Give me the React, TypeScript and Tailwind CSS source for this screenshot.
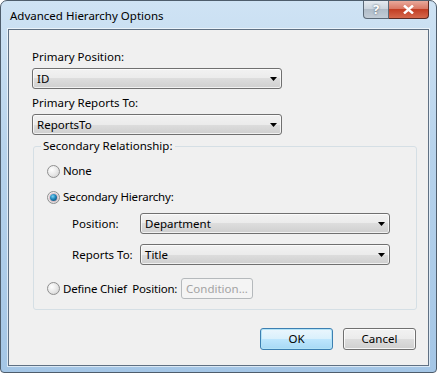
import React from "react";

const font = "font-['Segoe_UI','Noto_Sans','Open_Sans',sans-serif]";
const txt = "text-[11.5px] leading-4";

// Vista-style combo box with the split gradient look
function Combo({ value, width }: { value: string; width: string }) {
  return (
    <div
      className={`${width} h-[21px] flex items-center justify-between border border-[#707070] rounded-[3px] shadow-[inset_0_0_0_1px_rgba(255,255,255,0.7)] bg-[linear-gradient(#f2f2f2_0%,#ebebeb_50%,#dddddd_50%,#cfcfcf_100%)] pl-[4px] pr-[4px]`}
    >
      <span className={`${txt} text-black`}>{value}</span>
      <svg width="7" height="4" viewBox="0 0 7 4">
        <path d="M0 0h7L3.5 4z" fill="#000" />
      </svg>
    </div>
  );
}

function Radio({ checked, label }: { checked?: boolean; label: string }) {
  return (
    <div className="flex items-center h-4 gap-[3px] whitespace-nowrap">
      <div className="shrink-0 w-[13px] h-[13px] rounded-full border border-[#8f8f8f] bg-[radial-gradient(circle_at_35%_35%,#ffffff_0%,#e6e6e6_55%,#c9c9c9_100%)] flex items-center justify-center">
        {checked && (
          <div className="w-[7px] h-[7px] rounded-full bg-[radial-gradient(circle_at_40%_35%,#7cd3f2_0%,#1d83b8_45%,#0b3a5c_100%)] shadow-[0_0_0_1px_rgba(200,140,160,0.5)]" />
        )}
      </div>
      <span className={`${txt} whitespace-pre tracking-[-0.2px]`}>{label}</span>
    </div>
  );
}

function Button({ label, primary, disabled, width }: { label: string; primary?: boolean; disabled?: boolean; width: string }) {
  if (disabled) {
    return (
      <div className={`${width} ${txt} shrink-0 h-[21px] flex items-center justify-center rounded-[3px] border border-[#b5b9bc] bg-[#f4f4f4] text-[#a3a3a3]`}>
        {label}
      </div>
    );
  }
  return (
    <div
      className={`${width} ${txt} h-[22px] flex items-center justify-center rounded-[3px] border text-black ${
        primary
          ? "border-[#3c7fb1] shadow-[inset_0_0_0_1px_#b3e3f7] bg-[linear-gradient(#eaf6fd_0%,#d9f0fc_50%,#bee6fd_50%,#a7d9f5_100%)]"
          : "border-[#707070] shadow-[inset_0_0_0_1px_rgba(255,255,255,0.8)] bg-[linear-gradient(#f2f2f2_0%,#ebebeb_50%,#dddddd_50%,#cfcfcf_100%)]"
      }`}
    >
      {label}
    </div>
  );
}

export default function App() {
  return (
    <div className={`${font} w-[437px] h-[373px] text-black`}>
      <div className="w-full h-full flex flex-col rounded-t-[7px] rounded-b-[4px] border border-[#4e5d6c] bg-[linear-gradient(#cfe3f4_0%,#b7d3ec_40%,#a4c6e6_100%)] px-[7px] pb-[6px]">
        {/* title bar */}
        <div className="h-[28px] flex items-start justify-between">
          <span className={`mt-[7px] ml-[2px] ${txt}`}>Advanced Hierarchy Options</span>
          <div className="flex">
            <div className="w-[26px] h-[18px] flex items-center justify-center rounded-bl-[4px] border border-t-0 border-[#5b6977] bg-[linear-gradient(#e4eaf0_0%,#c9d3dc_50%,#b0bcc8_50%,#c2ccd6_100%)] text-[13px] font-bold text-white [text-shadow:0_0_2px_#3b4a5a]">
              ?
            </div>
            <div className="w-[40px] h-[18px] flex items-center justify-center rounded-br-[4px] border border-l-0 border-t-0 border-[#5b2a22] bg-[linear-gradient(#e9a99b_0%,#d8735f_50%,#c23e24_50%,#d5684c_100%)]">
              <svg width="11" height="9" viewBox="0 0 11 9">
                <path d="M1 0.5L5.5 4.5L10 0.5M1 8.5L5.5 4.5L10 8.5" stroke="#fff" strokeWidth="2.4" fill="none" />
              </svg>
            </div>
          </div>
        </div>
        {/* client area */}
        <div className="flex-1 border border-[#5f7083] bg-[#f0f0f0] shadow-[0_0_0_1px_rgba(255,255,255,0.6)] pl-[23px] pt-[19px]">
          <div className={txt}>Primary Position:</div>
          <div className="mt-[3px]">
            <Combo value="ID" width="w-[250px]" />
          </div>
          <div className={`mt-[6px] ${txt}`}>Primary Reports To:</div>
          <div className="mt-[3px]">
            <Combo value="ReportsTo" width="w-[250px]" />
          </div>

          {/* group box */}
          <div className="relative mt-[11px] ml-[1px] w-[384px] h-[164px] border border-[#d5dfe5] rounded-[3px] pl-[13px] pt-[16px]">
            <span className={`absolute -top-[9px] left-[7px] px-[2px] bg-[#f0f0f0] ${txt}`}>
              Secondary Relationship:
            </span>
            <Radio label="None" />
            <div className="mt-[10px]">
              <Radio checked label="Secondary Hierarchy:" />
            </div>
            <div className="mt-[8px] flex items-center pl-[25px]">
              <span className={`w-[68px] ${txt}`}>Position:</span>
              <Combo value="Department" width="w-[250px]" />
            </div>
            <div className="mt-[10px] flex items-center pl-[25px]">
              <span className={`w-[68px] ${txt}`}>Reports To:</span>
              <Combo value="Title" width="w-[250px]" />
            </div>
            <div className="mt-[13px] flex items-center h-[21px]">
              <div className="w-[134px] shrink-0">
                <Radio label="Define Chief  Position:" />
              </div>
              <Button label="Condition..." disabled width="w-[72px]" />
            </div>
          </div>

          {/* dialog buttons */}
          <div className="mt-[18px] w-[384px] flex justify-end gap-[10px]">
            <Button label="OK" primary width="w-[73px]" />
            <Button label="Cancel" width="w-[73px]" />
          </div>
        </div>
      </div>
    </div>
  );
}
